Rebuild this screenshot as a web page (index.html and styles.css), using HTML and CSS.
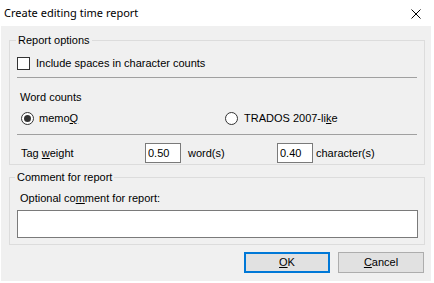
FILE: index.html
```html
<!DOCTYPE html>
<html>
<head>
<meta charset="utf-8">
<title>Create editing time report</title>
<link rel="stylesheet" href="styles.css">
</head>
<body>
<div class="window">
  <div class="titlebar">
    <span class="title">Create editing time report</span>
    <svg class="close" width="10" height="10" viewBox="0 0 10 10"><path d="M0.5 0.5 L9.5 9.5 M9.5 0.5 L0.5 9.5" stroke="#000" stroke-width="1" fill="none"/></svg>
  </div>
  <div class="client">
    <fieldset class="group group-options">
      <legend class="legend-options">Report options</legend>
      <label class="check-row"><span class="checkbox"></span><span class="check-text">Include spaces in character counts</span></label>
      <div class="sep sep-first"></div>
      <div class="section-label">Word counts</div>
      <div class="radio-row">
        <label class="radio radio-memoq"><svg class="radio-circle" width="13" height="13" viewBox="0 0 13 13"><circle cx="6.5" cy="6.5" r="6" fill="#fff" stroke="#333"/><circle cx="6.5" cy="6.5" r="3.5" fill="#333"/></svg><span class="radio-text">memo<u>Q</u></span></label>
        <label class="radio radio-trados"><svg class="radio-circle" width="13" height="13" viewBox="0 0 13 13"><circle cx="6.5" cy="6.5" r="6" fill="#fff" stroke="#333"/></svg><span class="radio-text trados-text">TRADOS 2007-li<u>k</u>e</span></label>
      </div>
      <div class="sep sep-second"></div>
      <div class="tag-row">
        <span class="tag-label">Tag <u>w</u>eight</span>
        <input class="num" type="text" value="0.50">
        <span class="unit unit-word">word(s)</span>
        <input class="num" type="text" value="0.40">
        <span class="unit unit-char">character(s)</span>
      </div>
    </fieldset>
    <fieldset class="group group-comment">
      <legend class="legend-comment">Comment for report</legend>
      <div class="comment-label">Optional co<u>m</u>ment for report:</div>
      <textarea class="comment-box"></textarea>
    </fieldset>
    <div class="buttons">
      <button class="btn btn-default"><u>O</u>K</button>
      <button class="btn"><u>C</u>ancel</button>
    </div>
  </div>
</div>
</body>
</html>
```
FILE: styles.css
```css
* {
  box-sizing: border-box;
}

html, body {
  margin: 0;
  padding: 0;
  background: #ffffff;
}

body {
  font-family: "Liberation Sans", Arial, sans-serif;
  font-size: 11px;
  line-height: 13px;
  color: #000000;
}

.window {
  width: 434px;
  height: 283px;
  display: flex;
  flex-direction: column;
}

.titlebar {
  height: 26px;
  flex: none;
  display: flex;
  align-items: center;
  justify-content: space-between;
  padding-left: 4px;
  padding-right: 13px;
  font-family: "Noto Sans", "Open Sans", sans-serif;
  font-size: 11px;
  line-height: 16px;
}

.title {
  color: #000;
}

.close {
  display: block;
  margin-top: 1px;
}

.client {
  flex: none;
  background: #f0f0f0;
  margin: 0 3px 2px 1px;
  height: 255px;
  padding: 8px 6px 0 8px;
  display: flex;
  flex-direction: column;
}

.group {
  margin: 0;
  border: 1px solid #dcdcdc;
  padding: 0 0 1px 0;
  min-width: 0;
}

.group legend {
  padding: 0 2px;
  line-height: 13px;
  font-size: 11px;
}

.legend-options {
  margin-left: 6px;
}

.legend-comment {
  margin-left: 5px;
}

.check-row {
  display: flex;
  align-items: center;
  height: 13px;
  margin-top: 10px;
  padding-left: 7px;
}

.checkbox {
  width: 13px;
  height: 13px;
  border: 1px solid #333333;
  background: #ffffff;
  flex: none;
}

.check-text {
  margin-left: 6px;
}

.sep {
  height: 1px;
  background: #a0a0a0;
  margin: 0 7px;
}

.sep-first {
  margin-top: 7px;
}

.sep-second {
  margin-top: 9px;
}

.section-label {
  margin-top: 13px;
  padding-left: 10px;
  height: 13px;
}

.radio-row {
  display: flex;
  margin-top: 8px;
  padding-left: 11px;
  height: 13px;
}

.radio {
  display: flex;
  align-items: center;
}

.radio-memoq {
  width: 204px;
}

.radio-circle {
  display: block;
  flex: none;
}

.radio-text {
  margin-left: 5px;
}

.trados-text {
  margin-left: 6px;
}

.tag-row {
  display: flex;
  align-items: center;
  margin-top: 8px;
  height: 20px;
  padding-left: 11px;
}

.tag-label {
  width: 124px;
  flex: none;
}

.num {
  width: 36px;
  height: 20px;
  flex: none;
  border: 1px solid #7a7a7a;
  background: #ffffff;
  font-family: "Liberation Sans", Arial, sans-serif;
  font-size: 11px;
  line-height: 13px;
  color: #000;
  padding: 0 0 0 2px;
  margin: 0;
  outline: none;
}

.unit-word {
  margin-left: 7px;
  width: 89px;
  flex: none;
}

.unit-char {
  margin-left: 3px;
}

.group-comment {
  margin-top: 6px;
  padding-bottom: 6px;
}

.comment-label {
  margin-top: 8px;
  padding-left: 10px;
  height: 13px;
}

.comment-box {
  display: block;
  margin: 5px 0 0 7px;
  width: 401px;
  height: 28px;
  border: 1px solid #7a7a7a;
  background: #ffffff;
  resize: none;
  padding: 0;
  outline: none;
}

.buttons {
  display: flex;
  justify-content: flex-end;
  gap: 8px;
  margin-top: 7px;
  padding-right: 1px;
}

.btn {
  width: 86px;
  height: 21px;
  margin: 0;
  padding: 0;
  background: #e1e1e1;
  border: 1px solid #adadad;
  font-family: "Liberation Sans", Arial, sans-serif;
  font-size: 11px;
  line-height: 13px;
  color: #000;
}

.btn-default {
  border: 2px solid #0078d7;
}
```
